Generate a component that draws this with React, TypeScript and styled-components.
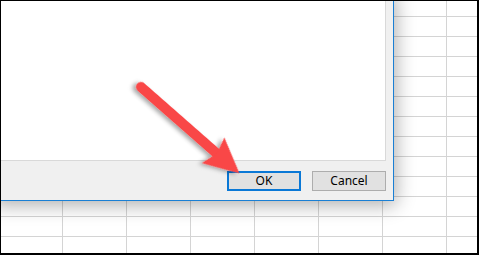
import React from 'react';
import styled, { createGlobalStyle } from 'styled-components';

const Global = createGlobalStyle`
  html, body {
    margin: 0;
    padding: 0;
    background: #fff;
  }
`;

const Sheet = styled.div`
  position: relative;
  width: 479px;
  height: 255px;
  box-sizing: border-box;
  overflow: hidden;
  border-style: solid;
  border-color: #000;
  border-width: 1px 2px 2px 1px;
  background-color: #fff;
  background-image:
    linear-gradient(to right, #d4d4d4 1px, transparent 1px),
    linear-gradient(to bottom, #d4d4d4 1px, transparent 1px);
  background-size: 64px 20px, 64px 20px;
  background-position: 61px 0, 0 15px;
`;

const Dialog = styled.div`
  position: absolute;
  left: -10px;
  top: -10px;
  width: 403px;
  height: 210px;
  box-sizing: border-box;
  display: flex;
  flex-direction: column;
  padding: 0 7px 9px 0;
  background: #f0f0f0;
  border: 1px solid #1a7fd4;
  box-shadow: 2px 4px 18px rgba(0, 0, 0, 0.32);
`;

const Panel = styled.div`
  flex: 1;
  background: #fff;
  border: 1px solid #d9d9d9;
`;

const Footer = styled.div`
  display: flex;
  justify-content: flex-end;
  gap: 11px;
  margin-top: 10px;
`;

const Button = styled.button<{ $default?: boolean }>`
  width: 74px;
  height: 20px;
  box-sizing: border-box;
  padding: 0;
  background: #e1e1e1;
  border: ${(p) => (p.$default ? '2px solid #0a78d6' : '1px solid #adadad')};
  font-family: 'Noto Sans', 'Liberation Sans', sans-serif;
  font-size: 12px;
  color: #000;
  line-height: 1;
`;

const ArrowLayer = styled.svg`
  position: absolute;
  left: -1px;
  top: -1px;
  pointer-events: none;
  overflow: visible;
`;

function Arrow() {
  const x0 = 141;
  const y0 = 87;
  const angle = (Math.atan2(86, 98) * 180) / Math.PI;
  return (
    <ArrowLayer width={479} height={255} viewBox="0 0 479 255">
      <defs>
        <filter id="arrowShadow" x="-20%" y="-20%" width="140%" height="140%">
          <feDropShadow dx="-2" dy="3" stdDeviation="2" floodColor="#000" floodOpacity="0.35" />
        </filter>
      </defs>
      <g transform={`translate(${x0} ${y0}) rotate(${angle})`} filter="url(#arrowShadow)">
        <line x1={0} y1={0} x2={104} y2={0} stroke="#f94646" strokeWidth={10} strokeLinecap="round" />
        <polygon points="96,-17 131,0 96,17 101,0" fill="#f94646" />
      </g>
    </ArrowLayer>
  );
}

export default function App() {
  return (
    <>
      <Global />
      <Sheet>
        <Dialog>
          <Panel />
          <Footer>
            <Button $default>OK</Button>
            <Button>Cancel</Button>
          </Footer>
        </Dialog>
        <Arrow />
      </Sheet>
    </>
  );
}
